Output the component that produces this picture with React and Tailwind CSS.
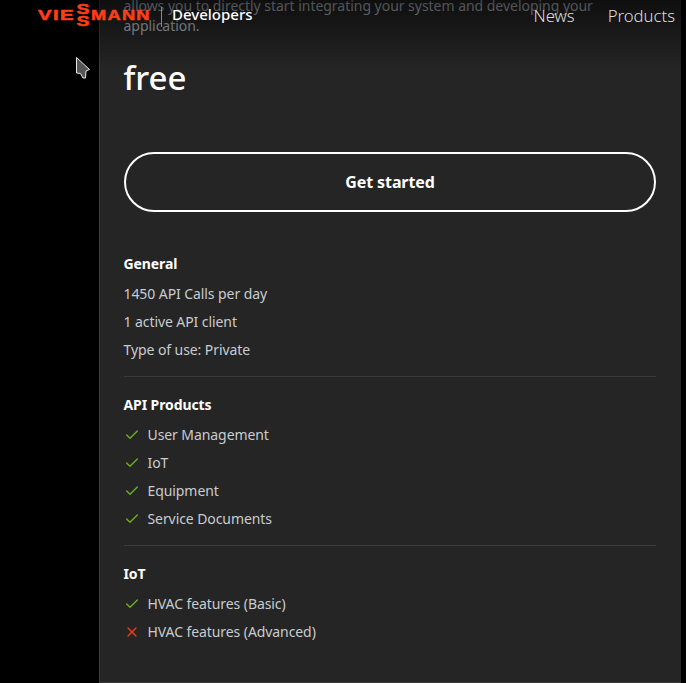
import { Check, X } from 'lucide-react';

const general = ['1450 API Calls per day', '1 active API client', 'Type of use: Private'];
const products = ['User Management', 'IoT', 'Equipment', 'Service Documents'];

const Heading = ({ children }) => (
  <div className="h-7 flex items-center text-sm font-bold text-white tracking-[-0.1px]">{children}</div>
);

const Feature = ({ label, ok = true }) => (
  <div className="h-7 flex items-center text-sm text-[#c8ccd0] tracking-[-0.08px]">
    <span className="w-6 flex items-center">
      {ok ? (
        <Check className="w-4 h-4 text-[#6fb01e]" strokeWidth={2} />
      ) : (
        <X className="w-4 h-4 text-[#f03c17]" strokeWidth={2} />
      )}
    </span>
    {label}
  </div>
);

const Logo = () => (
  <div className="flex items-center h-[23px] w-[112px] text-[#ff3e17] font-bold leading-none font-['Liberation_Sans',sans-serif] [-webkit-text-stroke:0.5px_#ff3e17]">
    <span className="w-[38px] text-sm tracking-[1px] scale-x-[1.45] origin-left">VIE</span>
    <span className="w-[14px] flex flex-col items-center text-[15px] leading-[12px] scale-x-[1.3]">
      <span>S</span>
      <span>S</span>
    </span>
    <span className="ml-[1px] text-sm tracking-[1px] scale-x-[1.3] origin-left">MANN</span>
  </div>
);

export default function App() {
  return (
    <div className="relative flex w-[686px] h-[683px] overflow-hidden bg-black font-['Noto_Sans',sans-serif]">
      <div className="w-[99px] shrink-0" />

      {/* Pricing card */}
      <main className="w-[582px] shrink-0 h-full bg-[#252525] border-l border-b border-[#3a3a3a] pl-[23.5px] pr-[25.5px]">
        <p className="-mt-[4px] w-[480px] text-sm leading-5 text-[#b0b8c0] tracking-[-0.03px]">
          allows you to directly start integrating your system and developing your application.
        </p>
        <h2 className="mt-[22px] text-[33px] leading-10 font-medium text-white">free</h2>
        <button className="mt-[54px] ml-[0.5px] w-[532px] h-[60px] rounded-full border-2 border-white text-base font-bold text-white tracking-[-0.1px]">
          Get started
        </button>

        <section className="mt-[38px] pb-3 border-b border-[#3a3a3a]">
          <Heading>General</Heading>
          <div className="mt-0.5">
            {general.map((row) => (
              <div key={row} className="h-7 flex items-center text-sm text-[#c8ccd0] tracking-[-0.08px]">{row}</div>
            ))}
          </div>
        </section>

        <section className="mt-3.5 pb-3 border-b border-[#3a3a3a]">
          <Heading>API Products</Heading>
          <div className="mt-0.5">
            {products.map((row) => <Feature key={row} label={row} />)}
          </div>
        </section>

        <section className="mt-3.5">
          <Heading>IoT</Heading>
          <div className="mt-0.5">
            <Feature label="HVAC features (Basic)" />
            <Feature label="HVAC features (Advanced)" ok={false} />
          </div>
        </section>
      </main>

      {/* Sticky header over the content */}
      <header className="absolute inset-x-0 top-0 h-[70px] bg-gradient-to-b from-black/60 to-transparent">
        <div className="flex items-start pl-[38px] pr-[11px] pt-[3px]">
          <Logo />
          <div className="ml-[11px] mt-[4px] w-px h-[20px] bg-[#888]" />
          <span className="ml-[10px] mt-[1px] text-[15px] leading-5 font-medium text-white">Developers</span>
          <nav className="ml-auto flex gap-[33px] mt-px text-[16.7px] leading-6 font-light text-[#dddddd]">
            <span>News</span>
            <span>Products</span>
          </nav>
        </div>
      </header>

      {/* Mouse pointer */}
      <svg className="absolute left-[75px] top-[56px]" width="16" height="23" viewBox="0 0 16 23">
        <path d="M1.5 1.5 L14.5 13.5 L11 15 L10.5 22 L8 22 L5.5 17.5 L1.5 17 Z" fill="#555555" stroke="#e8e8e8" strokeWidth="1" />
      </svg>
    </div>
  );
}
